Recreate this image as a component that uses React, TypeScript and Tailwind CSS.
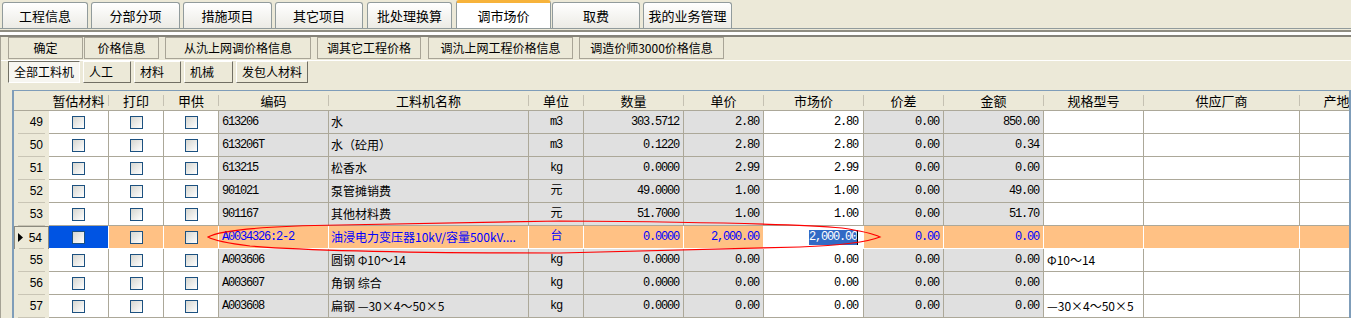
import React from 'react';

type Row = {
  no: number;
  code: string;
  name: string;
  unit: string;
  qty: string;
  price: string;
  market: string;
  diff: string;
  amount: string;
  spec?: string;
  active?: boolean;
};

const tabs = [
  { label: '工程信息', cls: 'ml-[2px] w-[86px]' },
  { label: '分部分项', cls: 'ml-[3px] w-[89px]' },
  { label: '措施项目', cls: 'ml-[3px] w-[89px]' },
  { label: '其它项目', cls: 'ml-[3px] w-[88px]' },
  { label: '批处理换算', cls: 'ml-[4px] w-[85px]' },
  { label: '调市场价', cls: 'ml-[4px] w-[95px]', active: true },
  { label: '取费', cls: 'ml-[1px] w-[88px]' },
  { label: '我的业务管理', cls: 'ml-[3px] w-[89px]' },
];

const actions = [
  { label: '确定', cls: 'ml-[7px] w-[75px]' },
  { label: '价格信息', cls: 'ml-[1px] w-[75px]' },
  { label: '从氿上网调价格信息', cls: 'ml-[6px] w-[146px]' },
  { label: '调其它工程价格', cls: 'ml-[6px] w-[104px]' },
  { label: '调氿上网工程价格信息', cls: 'ml-[7px] w-[145px]' },
  { label: '调造价师3000价格信息', cls: 'ml-[6px] w-[145px]' },
];

const filters = [
  { label: '全部工料机', cls: 'ml-[7px] w-[72px]', pressed: true },
  { label: '人工', cls: 'ml-[3px] w-[48px]' },
  { label: '材料', cls: 'ml-[3px] w-[47px]' },
  { label: '机械', cls: 'ml-[3px] w-[49px]' },
  { label: '发包人材料', cls: 'ml-[3px] w-[72px]' },
];

const headers = ['', '暂估材料', '打印', '甲供', '编码', '工料机名称', '单位', '数量', '单价', '市场价', '价差', '金额', '规格型号', '供应厂商', '产地'];

const rows: Row[] = [
  { no: 49, code: '613206', name: '水', unit: 'm3', qty: '303.5712', price: '2.80', market: '2.80', diff: '0.00', amount: '850.00' },
  { no: 50, code: '613206T', name: '水（砼用）', unit: 'm3', qty: '0.1220', price: '2.80', market: '2.80', diff: '0.00', amount: '0.34' },
  { no: 51, code: '613215', name: '松香水', unit: 'kg', qty: '0.0000', price: '2.99', market: '2.99', diff: '0.00', amount: '0.00' },
  { no: 52, code: '901021', name: '泵管摊销费', unit: '元', qty: '49.0000', price: '1.00', market: '1.00', diff: '0.00', amount: '49.00' },
  { no: 53, code: '901167', name: '其他材料费', unit: '元', qty: '51.7000', price: '1.00', market: '1.00', diff: '0.00', amount: '51.70' },
  { no: 54, code: 'A0034326:2-2', name: '油浸电力变压器10kV/容量500kV....', unit: '台', qty: '0.0000', price: '2,000.00', market: '2,000.00', diff: '0.00', amount: '0.00', active: true },
  { no: 55, code: 'A003606', name: '圆钢 Φ10～14', unit: 'kg', qty: '0.0000', price: '0.00', market: '0.00', diff: '0.00', amount: '0.00', spec: 'Φ10～14' },
  { no: 56, code: 'A003607', name: '角钢 综合', unit: 'kg', qty: '0.0000', price: '0.00', market: '0.00', diff: '0.00', amount: '0.00' },
  { no: 57, code: 'A003608', name: '扁钢 —30×4～50×5', unit: 'kg', qty: '0.0000', price: '0.00', market: '0.00', diff: '0.00', amount: '0.00', spec: '—30×4～50×5' },
];

const gridCols =
  'grid grid-cols-[35px_60px_55px_55px_110px_200px_55px_100px_80px_100px_80px_100px_100px_156px_74px]';
const mono = "font-['Liberation_Mono','Noto_Sans_CJK_SC',monospace] text-[12px] tracking-[-1.2px]";

const Checkbox = () => (
  <div className="w-[13px] h-[13px] border border-[#1C5180] bg-linear-to-br from-[#D6D6D0] to-white" />
);

const GridRow = ({ row }: { row: Row }) => {
  const a = row.active;
  const line = a ? 'border-white' : 'border-[#ACA899]';
  const gray = a ? 'bg-[#FFC184]' : 'bg-[#E0E0E0]';
  const white = a ? 'bg-[#FFC184]' : 'bg-white';
  const txt = a ? 'text-[#0000FF]' : 'text-black';
  const cell = `h-[23px] border-r border-b ${line} flex items-center overflow-hidden whitespace-nowrap ${txt}`;

  return (
    <div className={gridCols}>
      <div className={`h-[23px] flex flex-col bg-[#ECE9D8] ${a ? 'border border-[#8C8A7E] border-b-0' : ''}`}>
        <div className="flex-1 flex items-center justify-end pr-[6px] gap-[6px] text-[12px] text-black font-['Liberation_Sans',sans-serif]">
          {a && (
            <svg width="5" height="9" viewBox="0 0 5 9">
              <polygon points="0,0 5,4.5 0,9" fill="#000" />
            </svg>
          )}
          {row.no}
        </div>
        <div className="h-px mx-[4px] bg-[#C9C5B5]" />
      </div>
      <div className={`${cell} justify-center ${a ? 'bg-[#0054E3]' : 'bg-white'}`}>
        <Checkbox />
      </div>
      <div className={`${cell} justify-center ${white}`}>
        <Checkbox />
      </div>
      <div className={`${cell} justify-center ${white}`}>
        <Checkbox />
      </div>
      <div className={`${cell} ${gray} pl-[3px] ${mono}`}>{row.code}</div>
      <div className={`${cell} ${gray} pl-[2px] text-[12px] font-['Noto_Sans_CJK_SC',sans-serif]`}>{row.name}</div>
      <div className={`${cell} ${gray} justify-center ${mono}`}>{row.unit}</div>
      <div className={`${cell} ${gray} justify-end pr-[4px] ${mono}`}>{row.qty}</div>
      <div className={`${cell} ${gray} justify-end pr-[4px] ${mono}`}>{row.price}</div>
      <div className={`${cell} bg-white justify-end pr-[5px] ${mono}`}>
        {a ? (
          <>
            <span className="bg-[#316AC5] text-white leading-[15px]">{row.market}</span>
            <span className="w-px h-[15px] bg-black" />
          </>
        ) : (
          row.market
        )}
      </div>
      <div className={`${cell} ${gray} justify-end pr-[4px] ${mono}`}>{row.diff}</div>
      <div className={`${cell} ${gray} justify-end pr-[4px] ${mono}`}>{row.amount}</div>
      <div className={`${cell} ${white} pl-[3px] text-[12px] font-['Noto_Sans_CJK_SC',sans-serif]`}>{row.spec}</div>
      <div className={`${cell} ${white}`} />
      <div className={`${cell} ${white}`} />
    </div>
  );
};

export default function App() {
  return (
    <div className="relative w-[1351px] h-[318px] overflow-hidden bg-[#ECE9D8] text-black font-['Noto_Sans_CJK_SC',sans-serif] text-[12px]">
      {/* tabs */}
      <div className="h-[28px] flex items-end">
        {tabs.map((t) =>
          t.active ? (
            <div
              key={t.label}
              className={`${t.cls} h-[28px] bg-white border-x border-[#919B9C] border-t-[3px] border-t-[#F7B33B] rounded-t-[3px] flex items-center justify-center text-[13px]`}
            >
              {t.label}
            </div>
          ) : (
            <div
              key={t.label}
              className={`${t.cls} h-[26px] border border-b-0 border-[#919B9C] rounded-t-[3px] bg-linear-to-b from-white to-[#ECEBE5] flex items-center justify-center text-[13px]`}
            >
              {t.label}
            </div>
          )
        )}
      </div>
      <div className="h-px bg-[#919B9C]" />
      <div className="h-px bg-[#ECE9D8]" />
      <div className="h-[2px] bg-[#8F8D82]" />
      <div className="h-[3px] bg-white" />
      <div className="h-[2px] bg-[#85837A]" />

      <div className="border-l border-[#A5A295]">
        {/* action buttons */}
        <div className="h-[23px] flex items-start">
          {actions.map((b) => (
            <div
              key={b.label}
              className={`${b.cls} h-[22px] border border-[#A8A496] bg-[#ECE9D8] flex items-center justify-center`}
            >
              {b.label}
            </div>
          ))}
        </div>
        <div className="h-px bg-white" />
        {/* filter buttons */}
        <div className="h-[22px] flex">
          {filters.map((b) =>
            b.pressed ? (
              <div
                key={b.label}
                className={`${b.cls} h-[22px] border border-t-[#716F64] border-l-[#716F64] border-b-white border-r-white bg-[#F7F6F1] flex items-center pl-[5px]`}
              >
                {b.label}
              </div>
            ) : (
              <div
                key={b.label}
                className={`${b.cls} h-[22px] border border-t-white border-l-white border-b-[#716F64] border-r-[#716F64] bg-[#ECE9D8] flex items-center pl-[5px]`}
              >
                {b.label}
              </div>
            )
          )}
        </div>

        {/* grid */}
        <div className="mt-[7px] ml-[11px] border-t border-l-2 border-r-2 border-[#7F9DB9] overflow-hidden">
          <div className={`${gridCols} h-[20px] bg-[#ECE9D8] border-b border-[#ACA899]`}>
            {headers.map((h, i) => (
              <div key={i} className="flex items-center overflow-hidden whitespace-nowrap">
                <div className="flex-1 text-center text-[13px]">{h}</div>
                {i > 0 && <div className="w-px h-[11px] bg-[#C5C1B2]" />}
              </div>
            ))}
          </div>
          {rows.map((r) => (
            <GridRow key={r.no} row={r} />
          ))}
        </div>
      </div>

      {/* red hand-drawn ellipse */}
      <svg className="absolute inset-0 pointer-events-none" width="1351" height="318" viewBox="0 0 1351 318">
        <path
          d="M 208 237 C 222 229, 270 226, 340 225 L 560 221 C 700 222, 800 224, 842 228 C 862 231, 874 234, 880 237 C 870 241, 850 245, 800 247 L 560 253 C 400 253, 300 250, 250 246 C 226 243, 213 240, 208 237 Z"
          fill="none"
          stroke="#FF0000"
          strokeWidth="1.2"
        />
      </svg>
    </div>
  );
}
